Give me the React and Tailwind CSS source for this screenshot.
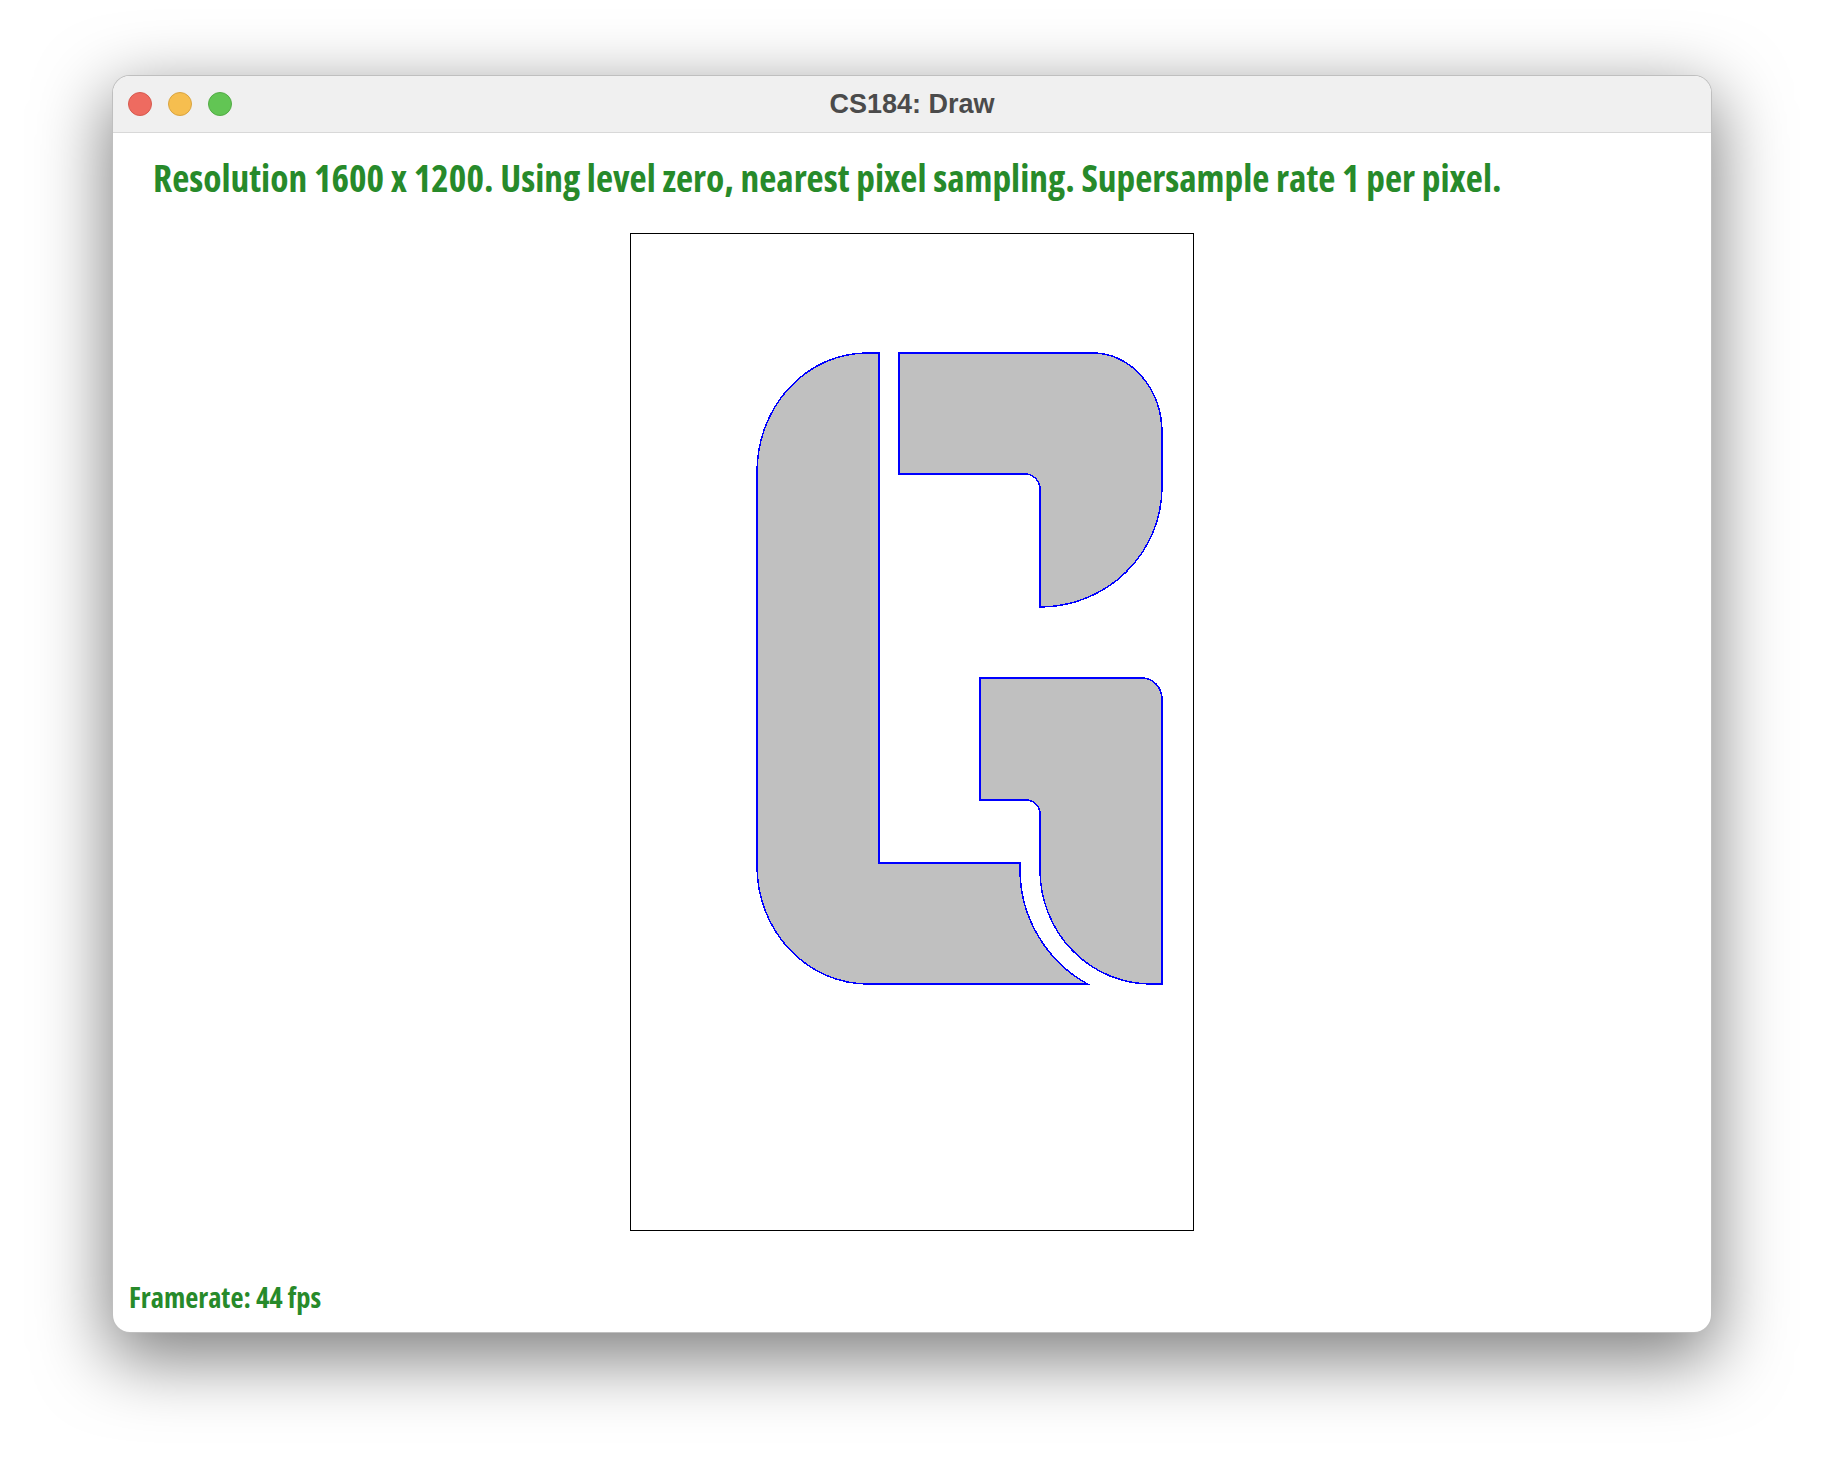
const green = "text-[#278a2a]";

function TrafficLights() {
  return (
    <div className="flex items-center gap-4 pl-[15px]">
      <span className="w-6 h-6 rounded-full bg-[#ee6b60] border border-[#d65a4f]" />
      <span className="w-6 h-6 rounded-full bg-[#f6be4f] border border-[#d9a441]" />
      <span className="w-6 h-6 rounded-full bg-[#62c554] border border-[#53ab46]" />
    </div>
  );
}

function Stencil() {
  // drawn in page coordinates, canvas inner box starts at (631, 234)
  return (
    <svg width="562" height="996" viewBox="631 234 562 996" className="block" shapeRendering="crispEdges">
      <g fill="#c0c0c0" stroke="#0000ff" strokeWidth="1.5">
        <path d="M 879 353 L 879 863 L 1020 863 L 1020 870 A 131 131 0 0 0 1087.5 984 L 868 984 A 111 118 0 0 1 757 866 L 757 472 A 110 119 0 0 1 867 353 Z" />
        <path d="M 899 353 L 1093 353 A 69 80 0 0 1 1162 433 L 1162 487 A 122 120 0 0 1 1040 607 L 1040 489 A 15 15 0 0 0 1025 474 L 899 474 Z" />
        <path d="M 980 678 L 1142 678 A 20 21 0 0 1 1162 699 L 1162 984 L 1151 984 A 111 114 0 0 1 1040 870 L 1040 814 A 14 14 0 0 0 1026 800 L 980 800 Z" />
      </g>
    </svg>
  );
}

export default function App() {
  return (
    <div className="min-h-[1480px] bg-white flex justify-center pt-[75px]">
      <div className="w-[1600px] h-[1258px] flex flex-col rounded-[18px] overflow-hidden border border-black/25 bg-white shadow-[0_22px_70px_4px_rgba(0,0,0,0.5)]">

        {/* Title bar */}
        <div className="h-[57px] shrink-0 grid grid-cols-[1fr_auto_1fr] items-center bg-[#f0f0f0] border-b border-[#d8d8d8]">
          <TrafficLights />
          <div className="text-[27px] font-bold text-[#4b4b4b] leading-none" style={{ fontFamily: '"Liberation Sans", Arial, sans-serif' }}>
            CS184: Draw
          </div>
          <div />
        </div>

        {/* Content */}
        <div className="flex-1 flex flex-col" style={{ fontFamily: '"Open Sans", "DejaVu Sans", sans-serif' }}>
          <p className={`mt-[26px] pl-[40px] text-[37.4px] leading-[37px] font-bold font-stretch-condensed ${green}`}>
            Resolution 1600 x 1200. Using level zero, nearest pixel sampling. Supersample rate 1 per pixel.
          </p>

          <div className="mt-[37px] self-center w-[564px] h-[998px] border border-black">
            <Stencil />
          </div>

          <p className={`mt-[52px] pl-[16px] text-[28.5px] leading-[28px] font-bold font-stretch-condensed ${green}`}>
            Framerate: 44 fps
          </p>
        </div>

      </div>
    </div>
  );
}
